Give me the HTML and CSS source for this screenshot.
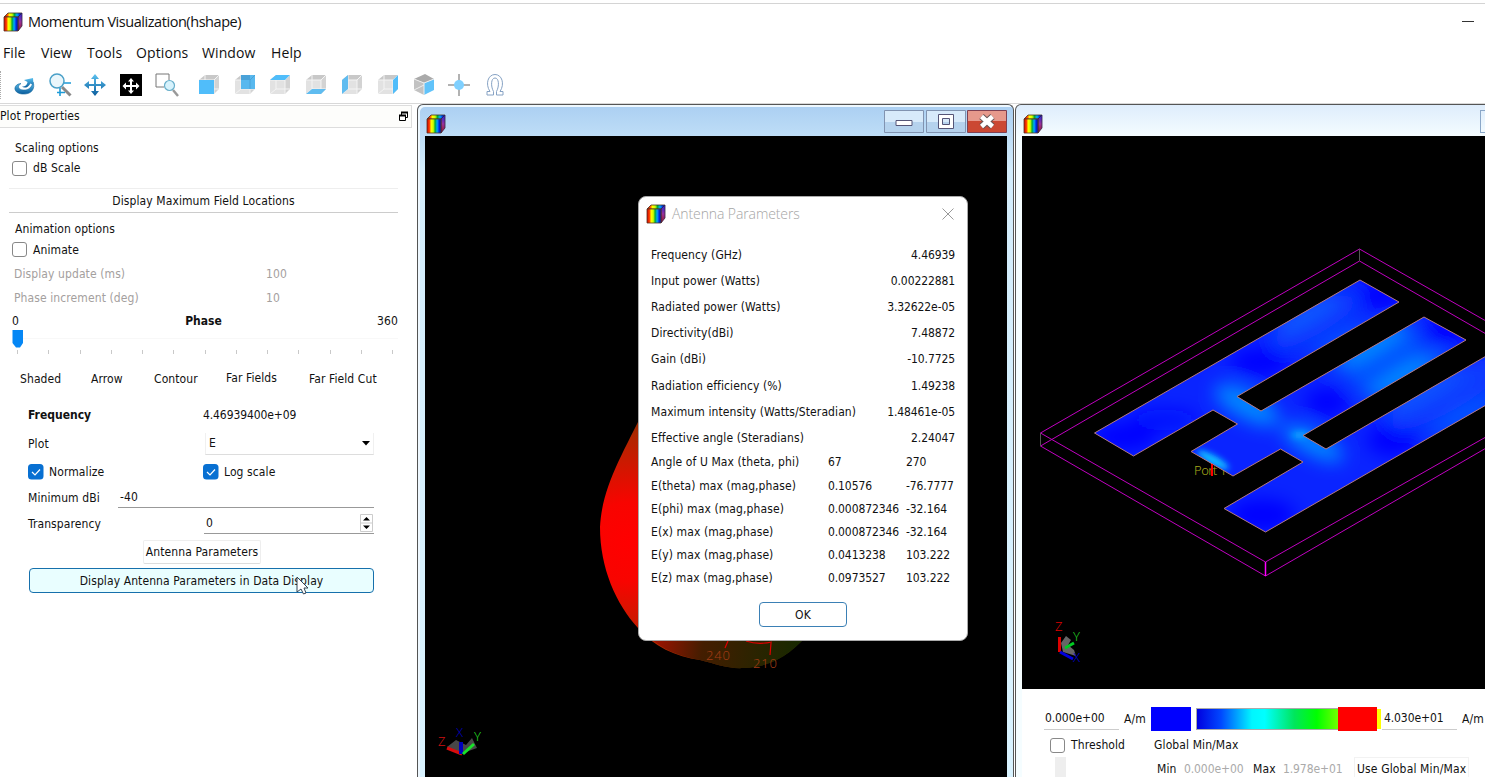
FILE: index.html
```
<!DOCTYPE html>
<html lang="en">
<head>
<meta charset="utf-8">
<title>Momentum Visualization(hshape)</title>
<link rel="stylesheet" href="styles.css">
</head>
<body>
<svg class="defs" width="0" height="0">
  <defs>
    <linearGradient id="rainbow"><stop offset="0" stop-color="#c00"/><stop offset=".18" stop-color="#f40"/><stop offset=".3" stop-color="#ff0"/><stop offset=".45" stop-color="#cf0"/><stop offset=".58" stop-color="#0a3"/><stop offset=".72" stop-color="#0af"/><stop offset=".88" stop-color="#02d"/><stop offset="1" stop-color="#02a"/></linearGradient>
    <linearGradient id="cubeSide" x2="0" y2="1"><stop offset="0" stop-color="#22d"/><stop offset=".5" stop-color="#939"/><stop offset="1" stop-color="#912"/></linearGradient>
    <linearGradient id="steel" x2="0" y2="1"><stop offset="0" stop-color="#5cc2f0"/><stop offset="1" stop-color="#0a5c9c"/></linearGradient>
    <symbol id="logo" viewBox="0 0 20 20">
      <path d="M1 5L5 1H19L15 5Z" fill="url(#rainbow)" stroke="#432" stroke-width=".8"/>
      <path d="M15 5L19 1V14L15 19Z" fill="url(#cubeSide)" stroke="#324" stroke-width=".8"/>
      <path d="M1 5H15V19H1Z" fill="url(#rainbow)" stroke="#532" stroke-width=".8"/>
    </symbol>
    <symbol id="cube" viewBox="0 0 22 22">
      <path d="M1 6L7 1H21L16 6Z" fill="#c8c8c8"/><path d="M16 6L21 1V15L16 20Z" fill="#d3d3d3"/><path d="M1 6H16V20H1Z" fill="#e2e2e2"/>
      <path d="M7 1V15H21M7 15L1 20M1 6H16V20M16 6L21 1" fill="none" stroke="#f4f4f4"/>
    </symbol>
  </defs>
</svg>
<div class="app">
  <header class="titlebar"><svg class="logo"><use href="#logo"/></svg><span class="title">Momentum Visualization(hshape)</span><i class="minimize"></i></header>
  <nav class="menu"><span class="m1">File</span><span class="m2">View</span><span class="m3">Tools</span><span class="m4">Options</span><span class="m5">Window</span><span class="m6">Help</span></nav>
  <div class="toolbar">
    <i class="grip"></i>
    <svg viewBox="0 0 24 24"><path d="M9 10.500C1 11 .5 20 10 21C20 22 23.500 15 21 9C20 14 17 17.500 11 17C6 16.500 5 13 9 10.500Z" fill="url(#steel)" stroke="#1769a0" stroke-width=".6"/><path d="M12 7L21 5L21.500 12L18.500 10.500C16 15 12 15.500 10 13.500C14 13.500 15 11.500 15.500 9Z" fill="url(#steel)"/></svg>
    <svg viewBox="0 0 24 24"><path d="M14 14L22.500 22.500" stroke="#888" stroke-width="3"/><path d="M14 10H23M9 19.500H17M12 15V23" stroke="#1d9bd8" stroke-width="1.600"/><circle cx="9" cy="8" r="7" fill="#eaf6fb" stroke="#4aa0c8" stroke-width="1.500"/></svg>
    <svg viewBox="0 0 24 24"><path d="M12 1L16 6H13V11H18V8L23 12L18 16V13H13V18H16L12 23L8 18H11V13H6V16L1 12L6 8V11H11V6H8Z" fill="url(#steel)"/></svg>
    <svg viewBox="0 0 24 24"><path d="M1 1H23V23H1Z" fill="#000"/><path d="M12 5L15 8.500H13V12H17V9.500L20.500 13L17 16.500V14H13V17.500H15L12 21L9 17.500H11V14H7V16.500L3.500 13L7 9.500V12H11V8.500H9Z" fill="#fff"/></svg>
    <svg viewBox="0 0 24 24"><path d="M9 14H1V1H14V7" fill="none" stroke="#777"/><path d="M18 17L23 23" stroke="#999" stroke-width="2.500"/><circle cx="14.500" cy="12.500" r="5" fill="#d6f2fc" stroke="#67aeca" stroke-width="1.200"/></svg>
    <i class="space"></i>
    <svg viewBox="0 0 24 24"><use href="#cube" x="1" y="1" width="22" height="22"/><path d="M2 7H17V21H2Z" fill="#50bdfa"/></svg>
    <svg viewBox="0 0 24 24"><use href="#cube" x="1" y="1" width="22" height="22"/><path d="M8 2H22V16H8Z" fill="#58b8ee"/><path d="M8 7H17V2H8Z" fill="#4aa2d8"/><path d="M17 7V16M17 7L22 2" stroke="#4aa2d8" fill="none"/></svg>
    <svg viewBox="0 0 24 24"><use href="#cube" x="1" y="1" width="22" height="22"/><path d="M2 7L8 2H22L17 7Z" fill="#50bdfa"/></svg>
    <svg viewBox="0 0 24 24"><use href="#cube" x="1" y="1" width="22" height="22"/><path d="M2 21L8 16H22L17 21Z" fill="#5fbcf0"/></svg>
    <svg viewBox="0 0 24 24"><use href="#cube" x="1" y="1" width="22" height="22"/><path d="M2 7L8 2V16L2 21Z" fill="#5fbcf0"/></svg>
    <svg viewBox="0 0 24 24"><use href="#cube" x="1" y="1" width="22" height="22"/><path d="M17 7L22 2V16L17 21Z" fill="#50bdfa"/></svg>
    <svg viewBox="0 0 24 24"><path d="M2 6L13 1L22 6L12 10Z" fill="#aaa"/><path d="M2 6L12 10V22L2 17Z" fill="#c2c2c2"/><path d="M12 10L22 6V17L12 22Z" fill="#61c3fa"/><path d="M2 17L12 12M2 6L12 10L22 6M12 10V22" fill="none" stroke="#eee"/></svg>
    <svg viewBox="0 0 24 24"><path d="M12 1V23M1 12H23" stroke="#999" stroke-width="1.500"/><circle cx="12" cy="12" r="5" fill="#7fd0ff"/></svg>
    <svg viewBox="0 0 24 24"><path d="M4 22V18.500H7C2 11 5 1.500 12 1.500S22 11 17 18.500H20V22H13.500V18.500C16.500 13 16 5 12 5S7.500 13 10.500 18.500V22Z" fill="#fff" stroke="#86a2c4"/></svg>
  </div>
  <main class="workspace">
    <section class="panel">
      <div class="dock"><span>Plot Properties</span><svg width="9" height="10"><path d="M2.500 1.500H8.500V6.500H2.500Z" fill="#fff" stroke="#000"/><path d="M2 1.500H9" stroke="#000" stroke-width="2"/><path d="M.5 4.500H6.500V9.500H.5Z" fill="#fff" stroke="#000"/><path d="M0 4.500H7" stroke="#000" stroke-width="2"/></svg></div>
      <div class="row scaling">Scaling options</div>
      <div class="row db"><i class="check"></i>dB Scale</div>
      <div class="row maximum">Display Maximum Field Locations</div>
      <div class="row animation">Animation options</div>
      <div class="row animate"><i class="check"></i>Animate</div>
      <div class="row disabled"><span>Display update (ms)</span><span>100</span></div>
      <div class="row disabled"><span>Phase increment (deg)</span><span>10</span></div>
      <div class="row phase"><span>0</span><b>Phase</b><span>360</span></div>
      <svg class="slider" width="400" height="26" viewBox="0 0 400 26"><path d="M23 8.500H398" stroke="#f8f8f8"/><path d="M12.500 0H23V13L20 17.500H16L12.500 13Z" fill="#0587f5"/><path d="M17.500 20v4M48.500 20v4M80.500 20v4M111.500 20v4M142.500 20v4M173.500 20v4M205.500 20v4M236.500 20v4M267.500 20v4M298.500 20v4M330.500 20v4M361.500 20v4M392.500 20v4" stroke="#c9c9c9"/></svg>
      <div class="row tabs"><span>Shaded</span><span>Arrow</span><span>Contour</span><span class="current">Far Fields</span><span>Far Field Cut</span></div>
      <div class="row pair freq"><b>Frequency</b><span class="num">4.46939400e+09</span></div>
      <div class="row pair"><span>Plot</span><span class="combo">E<svg width="8" height="5"><path d="M0 0H8L4 4.500Z"/></svg></span></div>
      <div class="row pair checks"><span class="tick"><svg width="16" height="16"><rect width="15.500" height="15.500" rx="3.500" fill="#0870d2"/><path d="M4 8L7 11L12 5.500" fill="none" stroke="#fff" stroke-width="1.200"/></svg>Normalize</span><span class="tick"><svg width="16" height="16"><rect width="15.500" height="15.500" rx="3.500" fill="#0870d2"/><path d="M4 8L7 11L12 5.500" fill="none" stroke="#fff" stroke-width="1.200"/></svg>Log scale</span></div>
      <div class="row minimum"><span>Minimum dBi</span><span class="field">-40</span></div>
      <div class="row pair trans"><span>Transparency</span><span class="field spin">0<svg width="13" height="18"><path d="M.5.5H12.500V17.500H.5ZM.5 9H12.500" fill="#fff" stroke="#ccc"/><path d="M3 6.500L6.500 3L10 6.500ZM3 11.500L6.500 15L10 11.500Z"/></svg></span></div>
      <div class="ap">Antenna Parameters</div>
      <div class="display"><span>Display Antenna Parameters in Data Display</span><svg class="cursor" width="13" height="20"><path d="M1 1V16L5 13L7.500 18L10 17L8 12H12Z" fill="#fff" stroke="#345"/></svg></div>
    </section>

    <section class="window w1">
      <div class="wtitle"><svg class="logo"><use href="#logo"/></svg>
        <div class="buttons">
          <svg viewBox="0 0 40 23"><path class="btn" d="M.5.5H39.500V22.500H.5Z"/><path d="M1 12H39V22H1Z" fill="#9ec2e4" opacity=".6"/><path d="M12 10.500H28V15.500H12Z" fill="#fff" stroke="#557"/></svg>
          <svg viewBox="0 0 40 23"><path class="btn" d="M.5.5H39.500V22.500H.5Z"/><path d="M1 12H39V22H1Z" fill="#9ec2e4" opacity=".6"/><path d="M12.500 4.500H27.500V18.500H12.500ZM16.500 8.500V14.500H23.500V8.500Z" fill="#fff" fill-rule="evenodd" stroke="#557"/></svg>
          <svg viewBox="0 0 40 23"><path d="M.5.5H39.500V22.500H.5Z" fill="#e6998c" stroke="#7e4052"/><path d="M1 11H39V22H1Z" fill="#cb4833"/><path d="M14.500 6.500L25.500 16.500M25.500 6.500L14.500 16.500" stroke="#655" stroke-width="6.500"/><path d="M14.500 6.500L25.500 16.500M25.500 6.500L14.500 16.500" stroke="#fff" stroke-width="4.500"/></svg>
        </div>
      </div>
      <div class="canvas">
        <svg class="plot" viewBox="425 136 582 641">
          <defs><radialGradient id="ball" gradientUnits="userSpaceOnUse" cx="628" cy="542" r="180"><stop offset="0" stop-color="#f00"/><stop offset=".22" stop-color="#f80400"/><stop offset=".6" stop-color="#ad2800"/><stop offset="1" stop-color="#342800"/></radialGradient><linearGradient id="shade" gradientUnits="userSpaceOnUse" x1="650" y1="640" x2="800" y2="660"><stop offset="0" stop-color="#a71200"/><stop offset=".35" stop-color="#441d00"/><stop offset="1" stop-color="#162900"/></linearGradient></defs>
          <path d="M645 408C622 455 602 487 600 527C600 568 616 604 638 628C653 646 676 657 700 660C717 664 727 669 744 668C775 667 794 651 812 630L760 490Z" fill="url(#ball)"/>
          <path d="M648 636C663 650 678 656 700 660C717 664 727 669 744 668C775 667 794 651 812 630Z" fill="url(#shade)"/>
          <path d="M728 641l-3 7M746 641q12 4 26 1M771 643l-1 12" fill="none" stroke="#e00000" stroke-width="1.200"/>
          <g class="scene degree"><text x="706" y="660" textLength="24">240</text><text x="753" y="668" textLength="24">210</text></g>
          <path d="M447 747l9-7 10 5 6-7 5 10-17 6Z" fill="#484848"/><path d="M462 754L447 748" stroke="#d90c0c" stroke-width="3"/><path d="M461 754V742" stroke="#0000bd" stroke-width="4"/><path d="M463 754L474 744" stroke="#19e22a" stroke-width="3"/>
          <g class="scene axis"><text x="438" y="746" fill="#c11">Z</text><text x="456" y="737" fill="#00b">X</text><text x="474" y="741" fill="#2d2">Y</text></g>
        </svg>
        <div class="dialog">
          <div class="dtitle"><svg class="logo"><use href="#logo"/></svg><span>Antenna Parameters</span><svg class="close" width="12" height="12"><path d="M.5.5L11.500 11.500M11.500.5L.5 11.500" stroke="#999"/></svg></div>
          <div class="values">
            <div><span>Frequency (GHz)</span><span class="num">4.46939</span></div><div><span>Input power (Watts)</span><span class="num">0.00222881</span></div><div><span>Radiated power (Watts)</span><span class="num">3.32622e-05</span></div><div><span>Directivity(dBi)</span><span class="num">7.48872</span></div><div><span>Gain (dBi)</span><span class="num">-10.7725</span></div><div><span>Radiation efficiency (%)</span><span class="num">1.49238</span></div><div><span>Maximum intensity (Watts/Steradian)</span><span class="num">1.48461e-05</span></div><div><span>Effective angle (Steradians)</span><span class="num">2.24047</span></div>
          </div>
          <div class="vectors">
            <span>Angle of U Max (theta, phi)</span><span class="num">67</span><span class="num">270</span><span>E(theta) max (mag,phase)</span><span class="num">0.10576</span><span class="num">-76.7777</span><span>E(phi) max (mag,phase)</span><span class="num">0.000872346</span><span class="num">-32.164</span><span>E(x) max (mag,phase)</span><span class="num">0.000872346</span><span class="num">-32.164</span><span>E(y) max (mag,phase)</span><span class="num">0.0413238</span><span class="num">103.222</span><span>E(z) max (mag,phase)</span><span class="num">0.0973527</span><span class="num">103.222</span>
          </div>
          <div class="ok">OK</div>
        </div>
      </div>
    </section>

    <section class="window w2">
      <div class="wtitle"><svg class="logo"><use href="#logo"/></svg><i class="cut"></i></div>
      <div class="canvas">
        <svg class="plot" viewBox="1022 136 463 553">
          <defs>
            <clipPath id="patch"><path d="M1360 280L1399 302L1237 396.500L1261 411L1424 317L1466 340L1303 435.500L1326 449L1500 348V397L1265.500 532L1224 508.500L1303 462L1280.500 449L1233 476L1191 451.500L1237.500 424L1213 410L1133.500 456L1094.500 433Z"/></clipPath>
            <filter id="soft" x="-80%" y="-80%" width="260%" height="260%"><feGaussianBlur stdDeviation="9"/></filter>
            <filter id="soft2" x="-80%" y="-80%" width="260%" height="260%"><feGaussianBlur stdDeviation="3"/></filter>
          </defs>
          <g fill="none" stroke="#c000c0"><path d="M1500 329L1359.500 249L1040.500 433L1265.500 562L1500 429M1500 342L1359.500 261L1040.500 446L1265.500 576L1500 440"/><path d="M1359.500 249V261M1040.500 433V446" stroke="#555"/><path d="M1265.500 562V576" stroke="#f0f" stroke-width="1.500"/></g>
          <g class="scene port"><text x="1194" y="475" textLength="33">Port 1</text></g>
          <g clip-path="url(#patch)"><path d="M1090 275H1500V540H1090Z" fill="#0a24ff"/>
            <g filter="url(#soft)">
              <ellipse cx="1260" cy="362" rx="30" ry="14" fill="#00f"/><ellipse cx="1327" cy="402" rx="22" ry="14" fill="#00f"/><ellipse cx="1393" cy="440" rx="26" ry="16" fill="#00f"/><ellipse cx="1124" cy="437" rx="32" ry="14" fill="#0005ff"/><ellipse cx="1165" cy="420" rx="34" ry="10" fill="#0010ff"/><ellipse cx="1262" cy="515" rx="34" ry="16" fill="#0005ff"/><ellipse cx="1382" cy="295" rx="24" ry="14" fill="#00f"/><ellipse cx="1446" cy="331" rx="24" ry="13" fill="#00f"/>
              <ellipse cx="1316" cy="322" rx="50" ry="12" transform="rotate(-30 1316 322)" fill="#0742ff"/><ellipse cx="1306" cy="312" rx="38" ry="6" transform="rotate(-30 1306 312)" fill="#0867ff"/><ellipse cx="1338" cy="340" rx="35" ry="5" transform="rotate(-30 1338 340)" fill="#0667ff"/>
              <ellipse cx="1386" cy="361" rx="44" ry="20" transform="rotate(-30 1386 361)" fill="#0054ff"/><ellipse cx="1370" cy="345" rx="46" ry="8" transform="rotate(-30 1370 345)" fill="#0096ff"/><ellipse cx="1405" cy="377" rx="46" ry="8" transform="rotate(-30 1405 377)" fill="#0096ff"/>
              <ellipse cx="1247" cy="405" rx="36" ry="14" transform="rotate(28 1247 405)" fill="#0088ff"/><ellipse cx="1313" cy="443" rx="34" ry="12" transform="rotate(28 1313 443)" fill="#0088ff"/>
              <ellipse cx="1448" cy="394" rx="65" ry="17" transform="rotate(-30 1448 394)" fill="#073dff"/><ellipse cx="1425" cy="391" rx="48" ry="6" transform="rotate(-30 1425 391)" fill="#075fff"/><ellipse cx="1465" cy="416" rx="44" ry="6" transform="rotate(-30 1465 416)" fill="#056cff"/>
            </g><g filter="url(#soft2)"><ellipse cx="1213" cy="460" rx="18" ry="4.500" transform="rotate(30 1213 460)" fill="#10caff"/><ellipse cx="1300" cy="435" rx="9" ry="3" fill="#0aaaff"/></g>
          </g>
          <path d="M1360 280L1399 302L1237 396.500L1261 411L1424 317L1466 340L1303 435.500L1326 449L1500 348V397L1265.500 532L1224 508.500L1303 462L1280.500 449L1233 476L1191 451.500L1237.500 424L1213 410L1133.500 456L1094.500 433Z" fill="none" stroke="#b57880"/>
          <path d="M1212 464V476" stroke="#f00" stroke-width="2"/>
          <path d="M1061 643L1066 636L1071 640L1068 645L1074 650L1076 656L1063 652Z" fill="#666"/><path d="M1059.500 652V637" stroke="#d00" stroke-width="3"/><path d="M1060 652L1073 659" stroke="#00d" stroke-width="3"/><path d="M1065 648L1074 643" stroke="#0c2" stroke-width="3"/><g class="scene axis"><text x="1055" y="631" fill="#d00">Z</text><text x="1073" y="641" fill="#2c2">Y</text><text x="1073" y="662" fill="#00c">X</text></g>
        </svg>
      </div>
      <div class="legend">
        <div class="scale"><span class="edit num">0.000e+00</span><span class="unit">A/m</span><i class="blue"></i><i class="spectrum"></i><i class="red"></i><i class="yellow"></i><span class="edit second num">4.030e+01</span><span class="unit">A/m</span></div>
        <div class="threshold"><i class="check"></i><span>Threshold</span><span class="global">Global Min/Max</span></div>
        <div class="range"><i class="handle"></i><span class="min">Min</span><span class="muted num">0.000e+00</span><span class="max">Max</span><span class="muted num">1.978e+01</span><span class="use">Use Global Min/Max</span></div>
      </div>
    </section>
  </main>
</div>
</body>
</html>
```
FILE: styles.css
```
* { box-sizing: border-box; }
body { margin: 0; background: #fff; color: #111; font: 12px/16px "DejaVu Sans Condensed", "DejaVu Sans", sans-serif; font-stretch: condensed; letter-spacing: .1px; white-space: nowrap; }
.num { letter-spacing: -.1px; }
.defs { position: absolute; }
svg { display: block; flex: none; }
.app { width: 1485px; height: 777px; overflow: hidden; }
.logo { width: 20px; height: 20px; }
.titlebar { height: 37px; margin-top: 3px; border-top: 1px solid #d4d4d4; display: flex; align-items: center; padding: 0 11px 1px 3px; font: 14.500px/20px "Open Sans", sans-serif; letter-spacing: -.45px; }
.title { margin-left: 5px; }
.minimize { width: 12px; height: 1px; background: #333; margin-left: auto; }
.menu { height: 27px; display: flex; align-items: center; padding: 0 0 2px 3px; font: 14px/20px "Open Sans", sans-serif; }
.m1 { width: 38px; } .m2 { width: 46px; } .m3 { width: 49px; } .m4 { width: 66px; } .m5 { width: 69px; }
.toolbar { height: 37px; border-bottom: 1px solid #d8d8d8; display: flex; align-items: center; gap: 11.800px; padding-bottom: 1px; }
.toolbar svg { width: 24px; height: 24px; }
.grip { width: 1px; height: 28px; border-left: 1px dotted #aaa; margin-right: -1px; }
.space { width: 6px; margin-right: -11.800px; }
.workspace { display: flex; height: 673px; }
.panel { width: 417px; flex: none; }
.dock { width: 412px; height: 23px; margin-top: 1px; border: 1px solid #ddd; border-left: 0; background: #fdfdfb; display: flex; align-items: center; justify-content: space-between; padding-right: 3px; padding-bottom: 1px; }
.row { display: flex; align-items: center; height: 24px; }
.scaling { margin-top: 8px; padding-left: 15px; }
.db { height: 17px; padding-bottom: 1px; }
.check { width: 15px; height: 15px; border: 1px solid #888; border-radius: 3px; margin: 0 6px 0 12px; background: #fff; flex: none; }
.maximum { margin: 11px 0 4px 9px; width: 389px; height: 25px; border-top: 1px solid #eee; border-bottom: 1px solid #ccc; justify-content: center; }
.animation { padding-left: 15px; }
.animate { height: 17px; margin-bottom: 4px; }
.disabled { color: #a4a09e; padding-left: 14px; }
.disabled span:first-child { width: 252px; }
.phase { width: 398px; padding-left: 12px; justify-content: space-between; height: 21px; }
.phase b { margin-left: 11px; }
b { letter-spacing: 0; }
.slider { margin-top: -1px; }
.tabs { padding-left: 20px; margin-top: 11px; }
.tabs span:nth-child(1) { width: 71px; } .tabs span:nth-child(2) { width: 63px; } .tabs span:nth-child(3) { width: 72px; } .tabs span:nth-child(4) { width: 83px; }
.tabs .current { padding-bottom: 2px; }
.pair { display: grid; grid-template-columns: 175px 171px; padding-left: 28px; height: 29px; }
.freq { margin-top: 9px; }
.combo { height: 22px; margin-left: 2px; border: 1px solid #f0f0f0; border-top: 0; border-bottom-color: #ddd; display: flex; align-items: center; justify-content: space-between; padding: 0 3px; }
.checks { height: 27px; }
.tick { display: flex; align-items: center; gap: 5px; }
.minimum { padding-left: 28px; height: 25px; }
.minimum span:first-child { width: 90px; }
.field { height: 20px; border-bottom: 1px solid #999; width: 256px; padding: 1px 2px; }
.pair .field { width: 170px; display: flex; justify-content: space-between; align-items: center; padding: 0 1px 0 2px; margin-left: 1px; }
.trans { height: 27px; }
.ap { width: 118px; height: 24px; border: 1px solid #eee; border-bottom-color: #ddd; border-radius: 2px; line-height: 22px; margin: 3px 0 4px 143px; text-align: center; }
.display { width: 345px; height: 25px; border: 1px solid #1670ac; border-radius: 4px; background: #e9feff; text-align: center; line-height: 24px; margin-left: 29px; position: relative; }
.cursor { position: absolute; left: 266px; top: 7px; }
.window { height: 673px; flex: none; border: 1px solid #555; border-bottom: 0; border-radius: 6px 6px 0 0; }
.w1 { width: 597px; padding: 0 6px 0 7px; background: linear-gradient(#abcff2, #d3edfc 65px, #d9f3ff); box-shadow: inset 2px 2px #eef8ff; }
.w2 { width: 480px; margin-left: 1px; padding-left: 6px; background: linear-gradient(#deedfc, #f5fdff 32px, #f5fdff); }
.wtitle { height: 31px; display: flex; justify-content: space-between; align-items: flex-start; padding: 9px 0 0 1px; }
.buttons { display: flex; gap: 1.500px; margin-top: -4px; }
.buttons svg { width: 40px; height: 23px; }
.btn { fill: #d7eafa; stroke: #8193b0; }
.cut { width: 10px; height: 23px; border: 1px solid #8ba7c8; margin-top: -4px; margin-right: 4px; }
.canvas { position: relative; background: #000; }
.w1 .canvas { width: 582px; height: 641px; }
.w2 .canvas { width: 463px; height: 553px; }
.plot { width: 100%; height: 100%; }
.scene { font: 13px "Noto Sans", sans-serif; font-weight: 300; letter-spacing: 0; }
.degree { fill: #a03b15; }
.axis { font-size: 13px; }
.port { fill: #a9a91b; }
.dialog { position: absolute; left: 213px; top: 60px; width: 330px; height: 445px; background: #fff; border: 1px solid #aaa; border-radius: 8px; padding: 7px 12px 0; }
.dtitle { display: flex; align-items: center; height: 20px; margin-left: -5px; color: #a5a5a5; font: 14px/20px "Open Sans", sans-serif; font-weight: 300; }
.dtitle span { margin-left: 6px; letter-spacing: -.1px; }
.close { margin-left: auto; margin-right: 1px; }
.values { margin-top: 18px; }
.values div { height: 26.100px; display: flex; align-items: center; justify-content: space-between; }
.vectors { display: grid; grid-template-columns: 177px 78px 1fr; grid-auto-rows: 23.200px; align-items: center; }
.ok { width: 88px; height: 25px; margin: 12px auto 0; border: 1px solid #3b80b5; border-radius: 4px; line-height: 25px; text-align: center; }
.legend { width: 463px; height: 88px; background: #fff; overflow: hidden; }
.scale { height: 25px; margin: 17px 0 0 22px; display: flex; align-items: center; }
.scale > * { flex: none; }
.edit { width: 75px; height: 22px; border-bottom: 1px solid #ccc; padding: 2px 1px; }
.unit { margin-left: 5px; width: 27px; }
.blue { width: 40px; height: 24px; background: #00f; }
.spectrum { width: 142px; height: 22px; margin-left: 5px; background: linear-gradient(90deg, #0000e0, #0048ff 17%, #00f6ff 39%, #00ffff 48%, #00e65c 69%, #0f0 85%, #70ff00); border: 1px solid #aaa; border-right: 0; }
.red { width: 39px; height: 24px; background: #f00; }
.yellow { width: 4px; height: 20px; background: #ff0; }
.second { margin-left: 1px; padding-left: 2px; }
.threshold { display: flex; align-items: center; margin: 6px 0 0 16px; height: 16px; }
.global { margin-left: 29px; }
.range { display: flex; align-items: center; height: 23px; margin: 4px 0 0 33px; }
.range > * { flex: none; }
.handle { width: 11px; height: 23px; background: #eee; }
.min { margin-left: 91px; width: 27px; }
.muted { color: #aaa; width: 69px; }
.max { width: 30px; }
.use { border: 1px solid #f2f2f2; padding: 3px 2px; margin-left: 2px; letter-spacing: .15px; }
```
